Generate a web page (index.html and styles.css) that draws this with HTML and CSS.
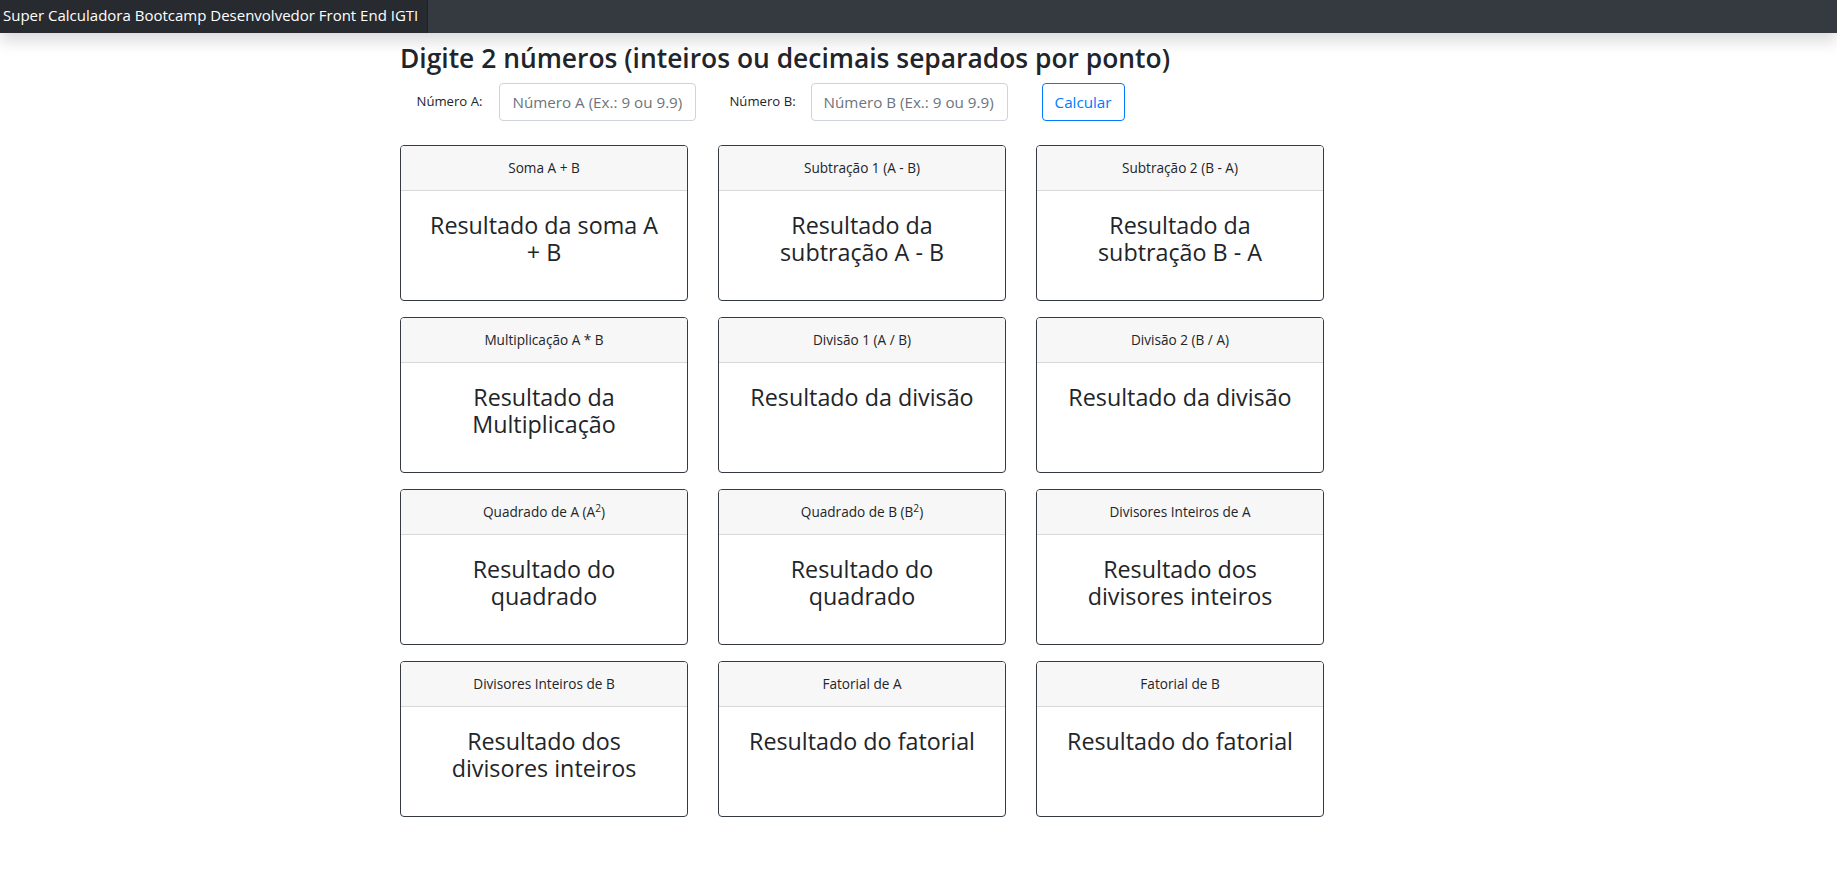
FILE: index.html
```html
<!DOCTYPE html>
<html lang="pt-BR">
<head>
<meta charset="utf-8">
<title>Super Calculadora</title>
<link rel="stylesheet" href="styles.css">
</head>
<body>
<nav class="navbar">
  <span class="brand">Super Calculadora Bootcamp Desenvolvedor Front End IGTI</span>
</nav>
<main class="container">
  <h1 class="title">Digite 2 números (inteiros ou decimais separados por ponto)</h1>
  <form class="form-row">
    <label class="label label-a" for="numA">Número A:</label>
    <input class="input" id="numA" type="text" placeholder="Número A (Ex.: 9 ou 9.9)">
    <label class="label label-b" for="numB">Número B:</label>
    <input class="input" id="numB" type="text" placeholder="Número B (Ex.: 9 ou 9.9)">
    <button class="btn" type="button">Calcular</button>
  </form>
  <section class="cards">
    <div class="card"><div class="card-header">Soma A + B</div><div class="card-body"><p class="result">Resultado da soma A + B</p></div></div>
    <div class="card"><div class="card-header">Subtração 1 (A - B)</div><div class="card-body"><p class="result">Resultado da subtração A - B</p></div></div>
    <div class="card"><div class="card-header">Subtração 2 (B - A)</div><div class="card-body"><p class="result">Resultado da subtração B - A</p></div></div>
    <div class="card"><div class="card-header">Multiplicação A * B</div><div class="card-body"><p class="result">Resultado da Multiplicação</p></div></div>
    <div class="card"><div class="card-header">Divisão 1 (A / B)</div><div class="card-body"><p class="result">Resultado da divisão</p></div></div>
    <div class="card"><div class="card-header">Divisão 2 (B / A)</div><div class="card-body"><p class="result">Resultado da divisão</p></div></div>
    <div class="card"><div class="card-header">Quadrado de A (A<sup>2</sup>)</div><div class="card-body"><p class="result">Resultado do quadrado</p></div></div>
    <div class="card"><div class="card-header">Quadrado de B (B<sup>2</sup>)</div><div class="card-body"><p class="result">Resultado do quadrado</p></div></div>
    <div class="card"><div class="card-header">Divisores Inteiros de A</div><div class="card-body"><p class="result">Resultado dos divisores inteiros</p></div></div>
    <div class="card"><div class="card-header">Divisores Inteiros de B</div><div class="card-body"><p class="result">Resultado dos divisores inteiros</p></div></div>
    <div class="card"><div class="card-header">Fatorial de A</div><div class="card-body"><p class="result">Resultado do fatorial</p></div></div>
    <div class="card"><div class="card-header">Fatorial de B</div><div class="card-body"><p class="result">Resultado do fatorial</p></div></div>
  </section>
</main>
</body>
</html>
```
FILE: styles.css
```css
* { box-sizing: border-box; }

body {
  margin: 0;
  font-family: "Open Sans", "Noto Sans", sans-serif;
  color: #212529;
  background: #fff;
}

.navbar {
  height: 33px;
  background: #343a40;
  box-shadow: 0 8px 16px rgba(0, 0, 0, 0.15);
  display: flex;
}

.brand {
  display: block;
  padding: 0 10px 3px 3px;
  line-height: 30px;
  font-size: 15px;
  color: #fff;
  background: rgba(0, 0, 0, 0.25);
  box-shadow: inset -1px 0 0 rgba(0, 0, 0, 0.25);
  white-space: nowrap;
}

.container {
  margin: 0 0 0 400px;
  width: 930px;
}

.title {
  margin: 10px 0 8px;
  font-size: 26.4px;
  line-height: 1.2;
  font-weight: 600;
}

.form-row {
  display: flex;
  align-items: center;
  height: 38px;
}

.label {
  font-size: 13.15px;
  line-height: 1.5;
  margin-right: 17px;
}

.label-a { margin-left: 16.5px; }
.label-b { margin-left: 33px; margin-right: 15px; }

.input {
  width: 197px;
  height: 38px;
  padding: 6px 12px;
  font-family: inherit;
  font-size: 15.2px;
  line-height: 24px;
  color: #495057;
  border: 1px solid #ced4da;
  border-radius: 4px;
  background: #fff;
}

.input::placeholder { color: #6c757d; opacity: 1; }

.btn {
  margin-left: 34px;
  height: 38px;
  padding: 6px 12px;
  font-family: inherit;
  font-size: 15.2px;
  line-height: 24px;
  color: #007bff;
  background: transparent;
  border: 1px solid #007bff;
  border-radius: 4px;
}

.cards {
  margin-top: 24px;
  display: grid;
  grid-template-columns: repeat(3, 288px);
  grid-auto-rows: 156px;
  column-gap: 30px;
  row-gap: 16px;
}

.card {
  display: flex;
  flex-direction: column;
  border: 1px solid #343a40;
  border-radius: 4px;
  overflow: hidden;
}

.card-header {
  padding: 12px 20px;
  font-size: 13.6px;
  line-height: 1.5;
  text-align: center;
  background: #f7f7f7;
  border-bottom: 1px solid rgba(0, 0, 0, 0.125);
}

.card-header sup {
  font-size: 75%;
  line-height: 0;
  position: relative;
  vertical-align: baseline;
  top: -0.5em;
}

.card-body {
  flex: 1;
  padding: 21px 20px 20px;
}

.result {
  margin: 0;
  font-size: 23.3px;
  line-height: 27.3px;
  font-weight: 500;
  text-align: center;
}
```
